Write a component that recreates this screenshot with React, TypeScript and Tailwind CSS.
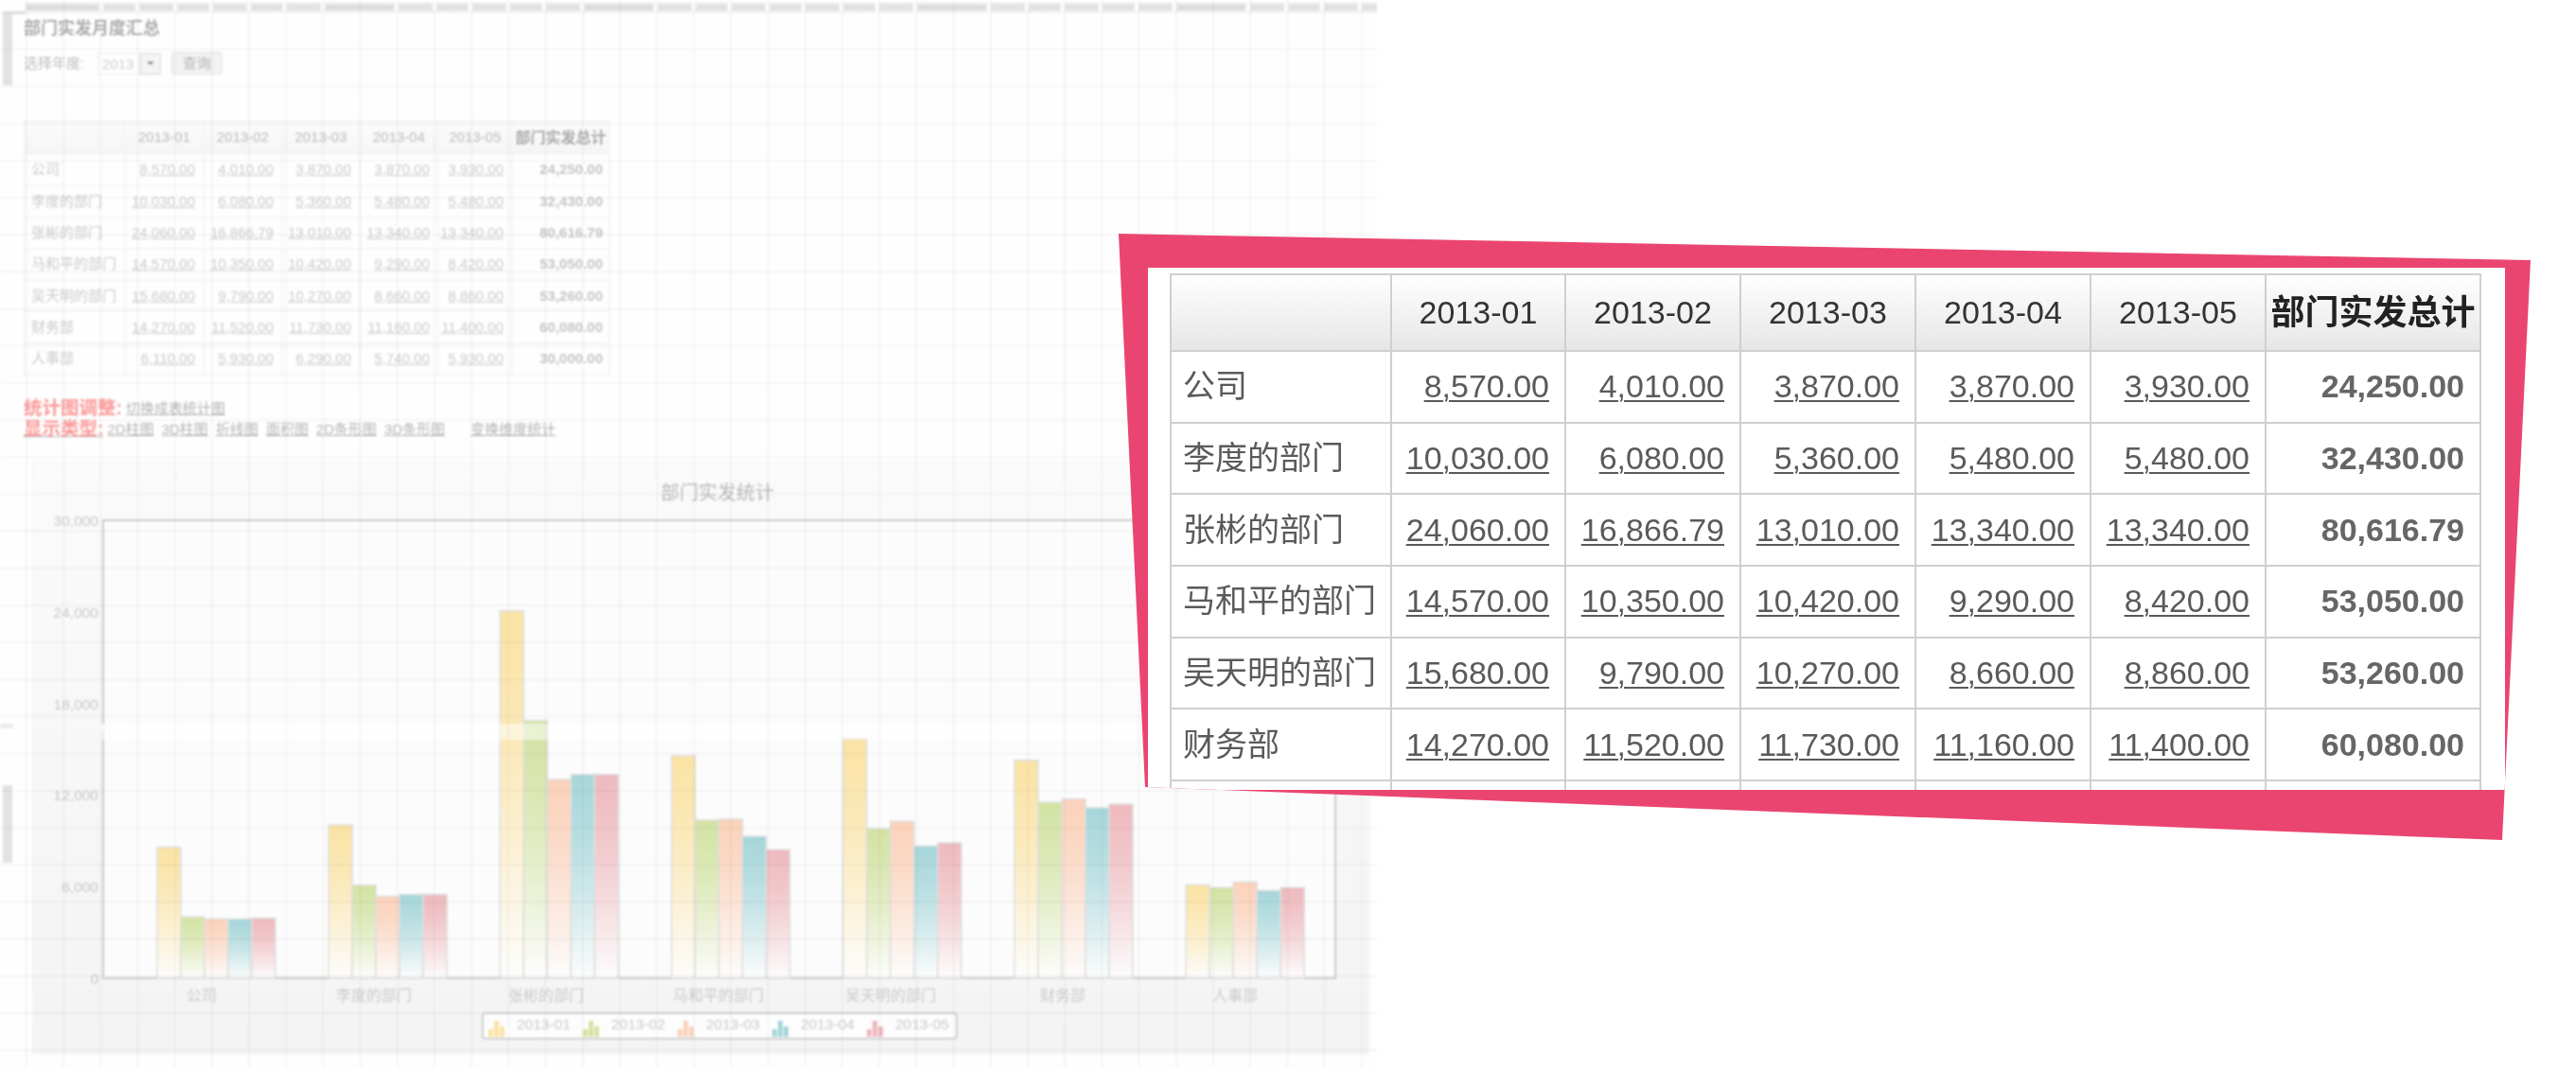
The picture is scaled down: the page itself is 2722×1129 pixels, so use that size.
const months = ['2013-01', '2013-02', '2013-03', '2013-04', '2013-05'];
const rows: { name: string; v: string[]; total: string }[] = [
  { name: '公司', v: ['8,570.00', '4,010.00', '3,870.00', '3,870.00', '3,930.00'], total: '24,250.00' },
  { name: '李度的部门', v: ['10,030.00', '6,080.00', '5,360.00', '5,480.00', '5,480.00'], total: '32,430.00' },
  { name: '张彬的部门', v: ['24,060.00', '16,866.79', '13,010.00', '13,340.00', '13,340.00'], total: '80,616.79' },
  { name: '马和平的部门', v: ['14,570.00', '10,350.00', '10,420.00', '9,290.00', '8,420.00'], total: '53,050.00' },
  { name: '吴天明的部门', v: ['15,680.00', '9,790.00', '10,270.00', '8,660.00', '8,860.00'], total: '53,260.00' },
  { name: '财务部', v: ['14,270.00', '11,520.00', '11,730.00', '11,160.00', '11,400.00'], total: '60,080.00' },
  { name: '人事部', v: ['6,110.00', '5,930.00', '6,290.00', '5,740.00', '5,930.00'], total: '30,000.00' },
];
const colors = ['#fbe3a4', '#d3e3a3', '#fbd2ba', '#a6d6da', '#eeb9be'];
const font = 'font-["Liberation_Sans","Noto_Sans_CJK_SC",sans-serif]';
const tabs = [78, 34, 36, 34, 36, 34, 36, 74, 36, 34, 36, 34, 36, 74, 36, 34, 36, 34, 36, 34, 36, 74, 36, 34, 36, 34, 36, 74, 36, 34, 36, 34, 36, 34, 36, 74, 36];

function MiniTable() {
  return (
    <table className="table-fixed border-collapse w-[618px] text-[15px] text-[#cbcbcb]">
      <colgroup>
        <col className="w-[106px]" />
        <col className="w-[83px]" />
        <col className="w-[83px]" />
        <col className="w-[82px]" />
        <col className="w-[83px]" />
        <col className="w-[78px]" />
        <col className="w-[103px]" />
      </colgroup>
      <thead>
        <tr className="h-[35px] bg-gradient-to-b from-[#fcfcfc] to-[#f5f5f5] text-[#bcbcbc]">
          <th className="border-2 border-[#f5f5f5]" />
          {months.map((m) => (
            <th key={m} className="border-2 border-[#f5f5f5] font-normal text-center">{m}</th>
          ))}
          <th className="border-2 border-[#f5f5f5] font-bold text-[16px] text-[#aaaaaa] whitespace-nowrap">部门实发总计</th>
        </tr>
      </thead>
      <tbody>
        {rows.map((r) => (
          <tr key={r.name} className="h-[33.3px]">
            <td className="border-2 border-[#f5f5f5] pl-[6px] whitespace-nowrap">{r.name}</td>
            {r.v.map((x, i) => (
              <td key={i} className="border-2 border-[#f5f5f5] pr-[8px] text-right underline">{x}</td>
            ))}
            <td className="border-2 border-[#f5f5f5] pr-[6px] text-right font-bold text-[#c6c6c6]">{r.total}</td>
          </tr>
        ))}
      </tbody>
    </table>
  );
}

function Chart() {
  const toY = (v: number) => 544 - (v / 30000) * 484;
  const num = (s: string) => parseFloat(s.replace(/,/g, ''));
  return (
    <svg width="1413" height="625" viewBox="0 0 1413 625" className="block">
      <defs>
        {colors.map((c, i) => (
          <linearGradient key={c} id={`g${i}`} x1="0" y1="0" x2="0" y2="1">
            <stop offset="0" stopColor={c} />
            <stop offset="0.3" stopColor={c} stopOpacity="0.8" />
            <stop offset="1" stopColor="#fdfdfd" />
          </linearGradient>
        ))}
      </defs>
      <rect x="74" y="60" width="1302" height="484" fill="#fcfcfc" stroke="#cccccc" strokeWidth="2" />
      <text x="723" y="38" textAnchor="middle" fontSize="20" fill="#b8b8b8">部门实发统计</text>
      {[0, 6000, 12000, 18000, 24000, 30000].map((v) => (
        <text key={v} x="69" y={toY(v) + 6} textAnchor="end" fontSize="15.5" fill="#c8c8c8">
          {v.toLocaleString('en-US')}
        </text>
      ))}
      {rows.map((r, g) => (
        <g key={r.name}>
          {r.v.map((x, i) => {
            const y = toY(num(x));
            return (
              <rect
                key={i}
                x={131 + g * 181.2 + i * 25}
                y={y}
                width="25"
                height={544 - y}
                fill={`url(#g${i})`}
                stroke="#dedede"
                strokeWidth="1.5"
              />
            );
          })}
          <text x={178 + g * 182} y="568" textAnchor="middle" fontSize="16" fill="#cacaca">{r.name}</text>
        </g>
      ))}
      <rect x="70" y="275" width="1240" height="17" fill="#ffffff" fillOpacity="0.5" />
      <rect x="70" y="275" width="8" height="6" fill="#fafafa" />
      <rect x="475" y="581" width="501" height="27" rx="3" fill="#fdfdfd" stroke="#d0d0d0" strokeWidth="2" />
      {months.map((m, i) => (
        <g key={m}>
          <rect x={481 + i * 100} y="598" width="5" height="8" fill={colors[i]} />
          <rect x={487 + i * 100} y="589" width="5" height="17" fill={colors[i]} />
          <rect x={493 + i * 100} y="595" width="5" height="11" fill={colors[i]} />
          <text x={511 + i * 100} y="598" fontSize="15.5" fill="#cacaca">{m}</text>
        </g>
      ))}
    </svg>
  );
}

export default function App() {
  return (
    <div className={`relative w-[2722px] h-[1129px] overflow-hidden bg-white ${font}`}>
      <div className="relative w-[1455px] h-[1129px] overflow-hidden bg-[#fefefe] blur-[1.1px]">
        <div className="flex pl-[27px] gap-[4px] mt-[3px] h-[9px] pt-0">
          {tabs.map((w, i) => (
            <div key={i} className="shrink-0 bg-[#e6e6e6] flex items-center px-[3px]" style={{ width: w }}>
              <div className={w > 50 ? 'w-full border-t-2 border-dotted border-[#c3bfd0]' : 'w-full border-t-2 border-dotted border-[#cfdadb]'} />
            </div>
          ))}
        </div>
        <div className="pl-[25px] pt-[6px]">
          <div className="h-[24px] leading-[24px] text-[18px] font-bold text-[#adadad]">部门实发月度汇总</div>
          <div className="mt-[13px] h-[24px] flex items-center text-[15px] text-[#bdbdbd]">
            <span className="w-[78px] whitespace-nowrap">选择年度:</span>
            <span className="h-[23px] w-[45px] pl-[4px] border border-[#efefef] leading-[21px] text-[#d0d0d0]">2013</span>
            <span className="h-[23px] w-[22px] border border-[#d8d8d8] bg-[#f4f4f4] flex items-center justify-center">
              <span className="w-0 h-0 border-x-[4px] border-x-transparent border-t-[4px] border-t-[#999]" />
            </span>
            <span className="ml-[11px] h-[24px] w-[54px] rounded-[3px] border border-[#e4e4e4] bg-[#f2f2f2] text-center leading-[22px] text-[#b4b4b4]">查询</span>
          </div>
          <div className="mt-[48px]"><MiniTable /></div>
          <div className="mt-[24px] h-[22px] flex items-center gap-[4px]">
            <span className="text-[19.5px] font-bold text-[#fb9a9a] whitespace-nowrap">统计图调整:</span>
            <span className="text-[15px] text-[#b4b4b4] underline whitespace-nowrap">切换成表统计图</span>
          </div>
          <div className="h-[22px] flex items-center gap-[8px] text-[15px] text-[#b4b4b4] underline whitespace-nowrap">
            <span className="text-[19.5px] font-bold text-[#fb9a9a] no-underline inline-block mr-[-4px]">显示类型:</span>
            <span>2D柱图</span>
            <span>3D柱图</span>
            <span>折线图</span>
            <span>面积图</span>
            <span>2D条形图</span>
            <span>3D条形图</span>
            <span className="ml-[19px]">变换维度统计</span>
          </div>
          <div className="mt-[24px] ml-[9px] w-[1413px] h-[625px] bg-gradient-to-b from-[#fbfbfb] to-[#f4f4f4] border border-[#f2f2f2]">
            <Chart />
          </div>
        </div>
        <div className="absolute left-[3px] top-[12px] w-[10px] h-[78px] bg-[#e2e2e2]" />
        <div className="absolute left-[3px] top-[12px] w-[24px] h-[3px] bg-[#e2e2e2]" />
        <div className="absolute left-[3px] top-[830px] w-[10px] h-[82px] bg-[#e2e2e2]" />
        <div className="absolute left-0 top-[765px] w-[14px] h-[5px] bg-[#ececec]" />
        <div className="absolute inset-0 pointer-events-none bg-[linear-gradient(to_right,rgba(0,0,0,0.035)_2px,transparent_2px),linear-gradient(to_bottom,rgba(0,0,0,0.035)_2px,transparent_2px)] bg-[size:39.2px_39.2px] bg-[position:27px_12px]" />
      </div>

      <div className="absolute left-[1182px] top-[247px] w-[1492px] h-[641px] bg-[#ea4570] [clip-path:polygon(0_0,1492px_28px,1462px_641px,28px_585px)]">
        <div className="ml-[31px] mt-[36px] w-[1434px] h-[552px] overflow-hidden bg-white pl-[23px] pt-[6px]">
          <table className="table-fixed border-collapse w-[1384px] text-[34px] text-[#5a5a5a] blur-[0.4px]">
            <colgroup>
              <col className="w-[233px]" />
              <col className="w-[184px]" />
              <col className="w-[185px]" />
              <col className="w-[185px]" />
              <col className="w-[185px]" />
              <col className="w-[185px]" />
              <col className="w-[227px]" />
            </colgroup>
            <thead>
              <tr className="h-[81px] bg-gradient-to-b from-white to-[#e6e6e6]">
                <th className="border-2 border-[#cfcfcf]" />
                {months.map((m) => (
                  <th key={m} className="border-2 border-[#cfcfcf] font-normal text-center text-[#333]">{m}</th>
                ))}
                <th className="border-2 border-[#cfcfcf] font-bold text-center text-[36px] text-[#222] whitespace-nowrap">部门实发总计</th>
              </tr>
            </thead>
            <tbody>
              {rows.slice(0, 6).map((r) => (
                <tr key={r.name} className="h-[75.67px]">
                  <td className="border-2 border-[#cfcfcf] pl-[12px] whitespace-nowrap">{r.name}</td>
                  {r.v.map((x, i) => (
                    <td key={i} className="border-2 border-[#cfcfcf] pr-[16px] text-right whitespace-nowrap">
                      <a className="underline decoration-2 underline-offset-[3px]">{x}</a>
                    </td>
                  ))}
                  <td className="border-2 border-[#cfcfcf] pr-[16px] text-right font-bold text-[#666]">{r.total}</td>
                </tr>
              ))}
              <tr className="h-[75.67px]">
                {[0, 1, 2, 3, 4, 5, 6].map((i) => (
                  <td key={i} className="border-2 border-[#cfcfcf]" />
                ))}
              </tr>
            </tbody>
          </table>
        </div>
      </div>
    </div>
  );
}
